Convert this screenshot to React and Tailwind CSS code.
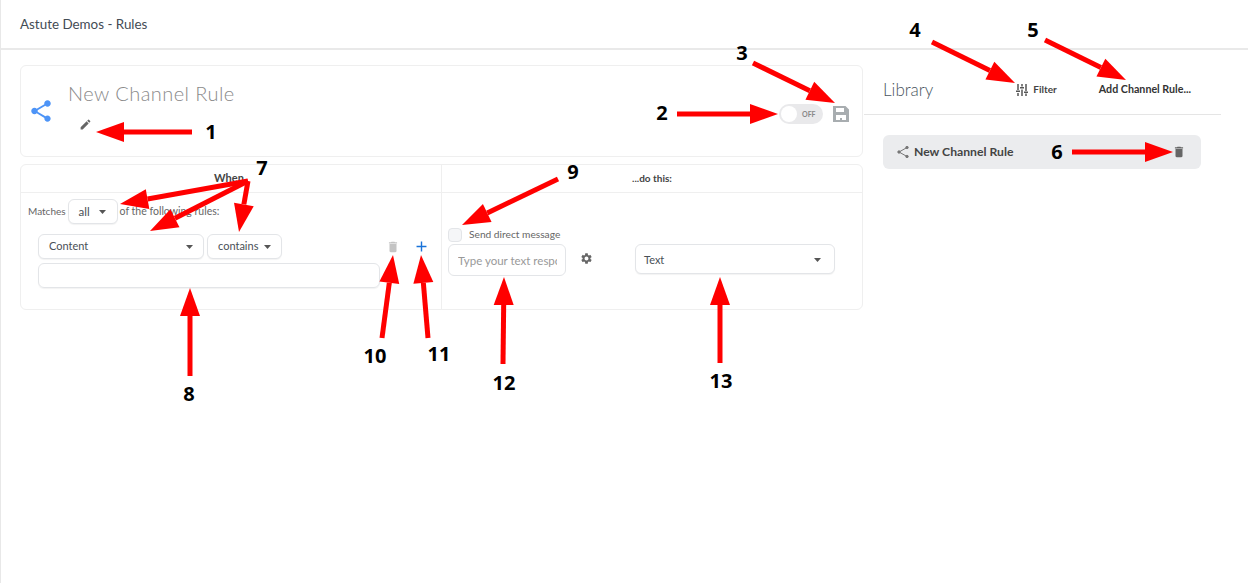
import { MdAdd, MdDelete, MdEdit, MdSettings, MdShare } from 'react-icons/md'

const ARROWS = [
  [192, 132, 96, 132],
  [677, 114, 778, 114],
  [753, 63, 835, 103],
  [932, 42, 1015, 83],
  [1045, 40, 1126, 80],
  [1072, 152, 1173, 152],
  [248, 181, 120, 204],
  [248, 181, 150, 231],
  [248, 181, 239, 232],
  [190, 376, 190, 288],
  [558, 179, 462, 225],
  [382, 338, 393, 255],
  [428, 338, 421, 255],
  [503, 364, 504, 277],
  [720, 363, 720, 277],
]

const NUMBERS = [
  ['1', 211, 132],
  ['2', 662, 113],
  ['3', 742, 53],
  ['4', 915, 30],
  ['5', 1033, 30],
  ['6', 1057, 152],
  ['7', 262, 168],
  ['8', 189, 394],
  ['9', 573, 172],
  ['10', 375, 356],
  ['11', 439, 354],
  ['12', 504, 383],
  ['13', 721, 381],
]

function Arrow({ x1, y1, x2, y2 }) {
  const len = Math.hypot(x2 - x1, y2 - y1)
  const ux = (x2 - x1) / len
  const uy = (y2 - y1) / len
  const bx = x2 - ux * 28
  const by = y2 - uy * 28
  const points = `${x2},${y2} ${bx - uy * 10},${by + ux * 10} ${bx + uy * 10},${by - ux * 10}`
  return (
    <g>
      <line x1={x1} y1={y1} x2={bx} y2={by} stroke="#ff0000" strokeWidth="5" />
      <polygon points={points} fill="#ff0000" />
    </g>
  )
}

function Select({ label, className }) {
  return (
    <div className={`flex items-center justify-between bg-white border border-[#e3e5e8] rounded-md text-[#495057] shadow-[0_1px_1px_rgba(0,0,0,0.05)] ${className}`}>
      <span>{label}</span>
      <svg viewBox="0 0 7 4" className="w-[7px] h-[4px] text-[#555]" fill="currentColor">
        <path d="M0 0h7L3.500 4z" />
      </svg>
    </div>
  )
}

export default function App() {
  return (
    <div className="relative w-[1248px] h-[583px] overflow-hidden bg-white border-l border-[#e8e8e8] font-['Lato',sans-serif] text-[#495057]">
      {/* Barra superior */}
      <header className="flex items-center h-[50px] pl-[19px] border-b-2 border-[#e9e9e9] text-[13.4px] text-[#444c55]">
        Astute Demos - Rules
      </header>

      <div className="flex pl-[19px] pr-[27px] pt-[15px]">
        {/* Columna izquierda */}
        <div className="w-[843px] flex flex-col gap-[7px]">
          {/* Encabezado de la regla */}
          <div className="flex items-center h-[92px] border border-[#efefef] rounded-md pl-[7px] pr-[13px]">
            <MdShare className="w-[26px] h-[26px] text-[#4d94f7]" />
            <div className="ml-[14px] self-start pt-[14px]">
              <div className="font-light text-[20px] leading-[26px] tracking-[0.45px] text-[#8a8a8a]">New Channel Rule</div>
              <MdEdit className="mt-[12px] ml-[11px] w-[13px] h-[13px] text-[#666]" />
            </div>
            <div className="ml-auto flex items-center gap-[10px] mt-[6px]">
              <div className="flex items-center w-[44px] h-[20px] rounded-full bg-[#e9e9eb] px-[2px]">
                <div className="w-[16px] h-[16px] rounded-full bg-white" />
                <span className="ml-[5px] text-[7px] font-bold text-[#888]">OFF</span>
              </div>
              <svg viewBox="0 0 16 16" className="w-[16px] h-[16px] text-[#a8adb0]" fill="currentColor">
                <path fillRule="evenodd" d="M0 0h12.500L16 3.500V16H0zM3 2v4h8V2zm0 7v5h10V9z" />
                <rect x="7" y="12" width="2" height="2" />
              </svg>
            </div>
          </div>

          {/* Panel de reglas */}
          <div className="flex h-[146px] border border-[#efefef] rounded-md">
            <div className="w-[421px] flex flex-col border-r border-[#efefef]">
              <div className="flex items-center justify-center h-[28px] border-b border-[#efefef] text-[11px] font-bold text-[#444]">
                <span className="ml-[-4px]">When</span>
              </div>
              <div className="flex items-center gap-[2px] pl-[7px] mt-[6px] text-[10px] text-[#666]">
                <span>Matches</span>
                <Select label="all" className="w-[50px] h-[25px] pl-[10px] pr-[11px] text-[11.5px]" />
                <span className="text-[10.500px]">of the following rules:</span>
              </div>
              <div className="flex items-center mt-[10px] pl-[17px] text-[11px]">
                <Select label="Content" className="w-[166px] h-[25px] pl-[10px] pr-[10px]" />
                <Select label="contains" className="w-[75px] h-[25px] ml-[3px] pl-[10px] pr-[10px]" />
                <MdDelete className="ml-[104px] w-[14px] h-[14px] text-[#c4c4c4]" />
                <MdAdd className="ml-[13px] w-[17px] h-[17px] text-[#1a73d9]" />
              </div>
              <div className="ml-[17px] mt-[4px] w-[342px] h-[25px] border border-[#e3e5e8] rounded-md shadow-[0_1px_1px_rgba(0,0,0,0.05)]" />
            </div>
            <div className="flex-1 flex flex-col">
              <div className="flex items-center justify-center h-[28px] border-b border-[#efefef] text-[10px] font-bold text-[#444]">
                ...do this:
              </div>
              <div className="flex items-center gap-[7px] pl-[6px] mt-[34px]">
                <div className="w-[14px] h-[14px] bg-[#f5f6f8] border border-[#e3e5e8] rounded-sm" />
                <span className="text-[10.2px] text-[#666]">Send direct message</span>
              </div>
              <div className="flex items-start pl-[6px] mt-[2px]">
                <input
                  readOnly
                  placeholder="Type your text response"
                  className="w-[118px] h-[32px] pl-[9px] pr-[8px] border border-[#e3e5e8] rounded-md text-[11.5px] placeholder:text-[#999] outline-none"
                />
                <MdSettings className="ml-[14px] mt-[8px] w-[13px] h-[13px] text-[#666]" />
                <Select label="Text" className="ml-[42px] w-[200px] h-[30px] pl-[8px] pr-[13px] pt-[1px] text-[11px]" />
              </div>
            </div>
          </div>
        </div>

        {/* Biblioteca */}
        <div className="flex-1 ml-[1px]">
          <div className="flex items-center h-[50px] pl-[19px] border-b border-[#e5e5e5]">
            <span className="font-light text-[17px] text-[#4a5560]">Library</span>
            <div className="ml-[83px] flex items-center gap-[5px] text-[10px] font-bold text-[#444]">
              <svg viewBox="0 0 12 12" className="w-[12px] h-[12px] text-[#555]" fill="currentColor">
                <path d="M1.250 0h1.500v6h-1.500zM0 6.500h4V8H0zM1.250 9h1.500v3h-1.500zM5.250 0h1.500v2.500h-1.500zM4 3h4v1.500H4zM5.250 5.500h1.500V12h-1.500zM9.250 0h1.500v7h-1.500zM8 7.500h4V9H8zM9.250 9.500h1.500V12h-1.500z" />
              </svg>
              Filter
            </div>
            <span className="ml-[42px] text-[10.7px] font-bold text-[#333]">Add Channel Rule...</span>
          </div>
          <div className="flex items-center ml-[19px] mt-[20px] w-[318px] h-[34px] pl-[14px] pr-[15px] bg-[#ebecee] rounded-md">
            <svg viewBox="0 0 12 12" className="w-[12px] h-[12px] text-[#777]" fill="none" stroke="currentColor" strokeWidth="1">
              <path d="M10 1.500 2 6l8 4.500" />
              <circle cx="2" cy="6" r="1.200" fill="currentColor" />
              <circle cx="10" cy="1.500" r="1.200" fill="currentColor" />
              <circle cx="10" cy="10.500" r="1.200" fill="currentColor" />
            </svg>
            <span className="ml-[5px] text-[12.2px] font-bold text-[#444]">New Channel Rule</span>
            <MdDelete className="ml-auto w-[14px] h-[14px] text-[#666]" />
          </div>
        </div>
      </div>

      {/* Anotaciones */}
      <svg className="absolute inset-0 pointer-events-none -ml-px" width="1248" height="583">
        {ARROWS.map(([x1, y1, x2, y2], i) => (
          <Arrow key={i} x1={x1} y1={y1} x2={x2} y2={y2} />
        ))}
      </svg>
      {NUMBERS.map(([n, x, y]) => (
        <span
          key={n}
          className="absolute -translate-x-1/2 -translate-y-1/2 font-['Open_Sans',sans-serif] font-bold text-[20px] leading-none text-black"
          style={{ left: x - 1, top: y }}
        >
          {n}
        </span>
      ))}
    </div>
  )
}
